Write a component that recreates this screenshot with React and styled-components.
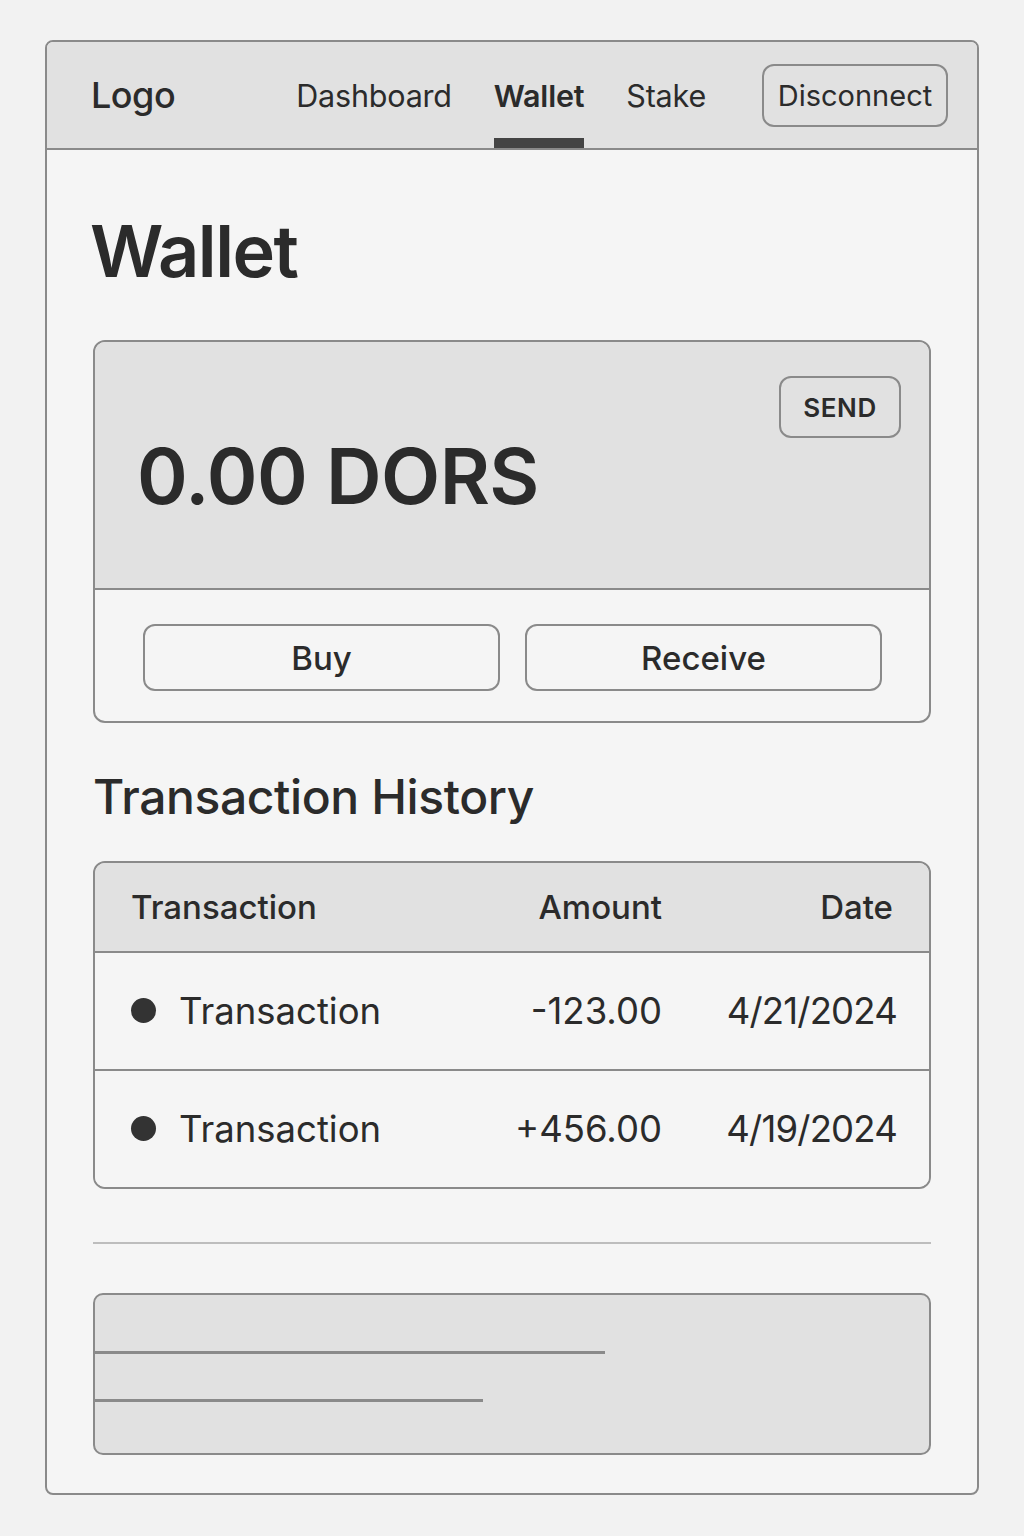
import React from "react";
import styled, { createGlobalStyle } from "styled-components";

const GlobalStyle = createGlobalStyle`
  body {
    margin: 0;
    background: #f2f2f2;
    font-family: Inter, "Liberation Sans", sans-serif;
    color: #2b2b2b;
  }
`;

const Frame = styled.div`
  width: 934px;
  margin: 40px auto 0;
  box-sizing: border-box;
  border: 2px solid #8a8a8a;
  border-radius: 8px;
  background: #f5f5f5;
  overflow: hidden;
`;

const Header = styled.header`
  height: 108px;
  box-sizing: border-box;
  display: flex;
  align-items: center;
  padding: 0 29px 0 44px;
  background: #e1e1e1;
  border-bottom: 2px solid #8a8a8a;
`;

const Logo = styled.div`
  font-size: 36px;
  font-weight: 500;
  letter-spacing: -0.5px;
`;

const Nav = styled.nav`
  display: flex;
  align-items: center;
  gap: 42px;
  margin-left: auto;
  height: 100%;
`;

const NavLink = styled.a`
  position: relative;
  display: flex;
  align-items: center;
  height: 100%;
  font-size: 30.5px;
  font-weight: ${(p) => (p.$active ? 600 : 400)};
  letter-spacing: -0.2px;
  color: #2b2b2b;
  text-decoration: none;

  &::after {
    content: "";
    display: ${(p) => (p.$active ? "block" : "none")};
    position: absolute;
    left: 0;
    right: 0;
    bottom: 0;
    height: 10px;
    background: #444;
  }
`;

const OutlineButton = styled.button`
  font-family: inherit;
  color: #2b2b2b;
  background: transparent;
  border: 2px solid #8a8a8a;
  border-radius: 12px;
  cursor: pointer;
`;

const DisconnectButton = styled(OutlineButton)`
  margin-left: 56px;
  height: 63px;
  width: 186px;
  font-size: 29px;
`;

const Content = styled.main`
  padding: 65px 46px 38px;
  display: flex;
  flex-direction: column;
`;

const Title = styled.h1`
  margin: 0 0 53px -3px;
  font-size: 72px;
  font-weight: 600;
  letter-spacing: -1.5px;
  line-height: 1;
`;

const Card = styled.section`
  border: 2px solid #8a8a8a;
  border-radius: 12px;
  overflow: hidden;
`;

const BalanceTop = styled.div`
  height: 248px;
  box-sizing: border-box;
  background: #e1e1e1;
  border-bottom: 2px solid #8a8a8a;
  display: flex;
  justify-content: space-between;
  align-items: flex-start;
  padding: 34px 28px 0 42px;
`;

const Balance = styled.div`
  margin-top: 62px;
  font-size: 77px;
  font-weight: 600;
  line-height: 1;
  letter-spacing: -0.6px;
`;

const SendButton = styled(OutlineButton)`
  height: 62px;
  width: 122px;
  font-size: 26px;
  font-weight: 600;
  letter-spacing: 0.6px;
`;

const ActionRow = styled.div`
  display: grid;
  grid-template-columns: 1fr 1fr;
  gap: 25px;
  padding: 34px 47px 30px 48px;
`;

const ActionButton = styled(OutlineButton)`
  height: 67px;
  font-size: 33px;
  font-weight: 500;
`;

const SectionTitle = styled.h2`
  margin: 48px 0 37px;
  font-size: 48px;
  font-weight: 500;
  letter-spacing: -0.4px;
  line-height: 1.1;
`;

const Table = styled.div`
  border: 2px solid #8a8a8a;
  border-radius: 12px;
  overflow: hidden;
`;

const Row = styled.div`
  display: grid;
  grid-template-columns: 1fr 200px 235px;
  align-items: center;
  padding: 0 32px 0 36px;
  height: ${(p) => (p.$head ? "88px" : "116px")};
  background: ${(p) => (p.$head ? "#e1e1e1" : "#f5f5f5")};
  font-size: ${(p) => (p.$head ? "33px" : "36.5px")};
  font-weight: ${(p) => (p.$head ? 500 : 400)};
  & + & {
    border-top: 2px solid #8a8a8a;
  }
`;

const Cell = styled.div`
  display: flex;
  align-items: center;
  justify-content: ${(p) => (p.$right ? "flex-end" : "flex-start")};
  gap: 23px;
  padding-right: ${(p) => p.$pad || 0}px;
  letter-spacing: ${(p) => p.$track || 0}px;
`;

const Dot = styled.span`
  width: 25px;
  height: 25px;
  border-radius: 50%;
  background: #333;
  flex-shrink: 0;
`;

const Divider = styled.hr`
  margin: 53px 0 49px;
  border: 0;
  border-top: 2px solid #bdbdbd;
`;

const Placeholder = styled.div`
  height: 162px;
  box-sizing: border-box;
  border: 2px solid #8a8a8a;
  border-radius: 10px;
  background: #e1e1e1;
  display: flex;
  flex-direction: column;
  gap: 45px;
  padding-top: 56px;
`;

const Line = styled.div`
  height: 3px;
  background: #8a8a8a;
  width: ${(p) => p.$w}px;
`;

const transactions = [
  { name: "Transaction", amount: "-123.00", date: "4/21/2024" },
  { name: "Transaction", amount: "+456.00", date: "4/19/2024" },
];

export default function App() {
  return (
    <>
      <GlobalStyle />
      <Frame>
        <Header>
          <Logo>Logo</Logo>
          <Nav>
            <NavLink>Dashboard</NavLink>
            <NavLink $active>Wallet</NavLink>
            <NavLink>Stake</NavLink>
          </Nav>
          <DisconnectButton>Disconnect</DisconnectButton>
        </Header>

        <Content>
          <Title>Wallet</Title>

          <Card>
            <BalanceTop>
              <Balance>0.00 DORS</Balance>
              <SendButton>SEND</SendButton>
            </BalanceTop>
            <ActionRow>
              <ActionButton>Buy</ActionButton>
              <ActionButton>Receive</ActionButton>
            </ActionRow>
          </Card>

          <SectionTitle>Transaction History</SectionTitle>

          <Table>
            <Row $head>
              <Cell>Transaction</Cell>
              <Cell $right>Amount</Cell>
              <Cell $right $pad={4}>Date</Cell>
            </Row>
            {transactions.map((t, i) => (
              <Row key={i}>
                <Cell>
                  <Dot />
                  {t.name}
                </Cell>
                <Cell $right>{t.amount}</Cell>
                <Cell $right $track={-0.8}>{t.date}</Cell>
              </Row>
            ))}
          </Table>

          <Divider />

          <Placeholder>
            <Line $w={510} />
            <Line $w={388} />
          </Placeholder>
        </Content>
      </Frame>
    </>
  );
}
